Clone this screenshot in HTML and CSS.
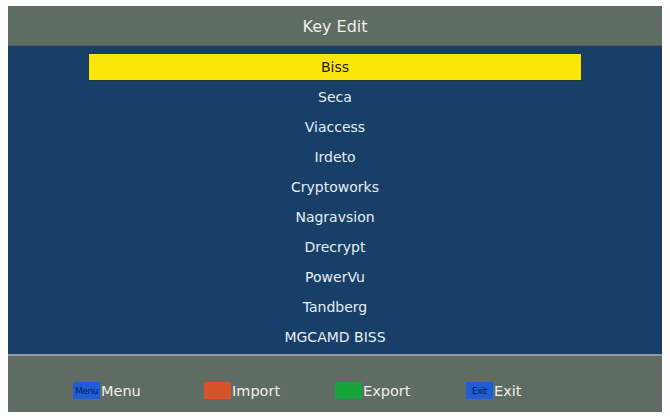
FILE: index.html
```html
<!DOCTYPE html>
<html lang="en">
<head>
  <meta charset="UTF-8">
  <title>Key Edit</title>
  <link rel="stylesheet" href="styles.css">
</head>
<body>
  <div class="screen">
    <div class="header">Key Edit</div>
    <ul class="key-list">
      <li class="key selected">Biss</li>
      <li class="key">Seca</li>
      <li class="key">Viaccess</li>
      <li class="key">Irdeto</li>
      <li class="key">Cryptoworks</li>
      <li class="key">Nagravsion</li>
      <li class="key">Drecrypt</li>
      <li class="key">PowerVu</li>
      <li class="key">Tandberg</li>
      <li class="key">MGCAMD BISS</li>
    </ul>
    <div class="footer">
      <div class="hint"><span class="swatch blue">Menu</span>Menu</div>
      <div class="hint"><span class="swatch red"></span>Import</div>
      <div class="hint"><span class="swatch green"></span>Export</div>
      <div class="hint"><span class="swatch blue">Exit</span>Exit</div>
    </div>
  </div>
</body>
</html>
```

FILE: styles.css
```css
/* General Styling */
body {
  margin: 0;
  padding: 6px 8px;
  background: #fff;
  font-family: "DejaVu Sans", Verdana, sans-serif;
}

.screen {
  width: 654px;
  height: 406px;
  display: flex;
  flex-direction: column;
  background: #5f6c63;
}

.header {
  height: 40px;
  padding-top: 1px;
  display: flex;
  align-items: center;
  justify-content: center;
  color: #eef0ee;
  font-size: 16px;
  border-bottom: 1px solid #4c5a55;
  box-sizing: border-box;
}

.key-list {
  list-style: none;
  margin: 0;
  padding: 6px 0 0;
  height: 310px;
  box-sizing: border-box;
  background: #183f68;
  border-bottom: 2px solid #8e9c9a;
}

.key {
  height: 30px;
  display: flex;
  align-items: center;
  justify-content: center;
  color: #e6eef4;
  font-size: 14px;
}

.key.selected {
  width: 494px;
  height: 28px;
  margin: 1px auto;
  background: #fbe60c;
  border: 1px solid #203a3a;
  box-sizing: border-box;
  color: #1c1c10;
}

.footer {
  flex: 1;
  display: flex;
  align-items: flex-start;
  padding: 26px 0 0 65px;
}

.hint {
  width: 131px;
  display: flex;
  align-items: center;
  color: #eef0ee;
  font-size: 14.5px;
}

.swatch {
  width: 27px;
  height: 17px;
  margin-right: 1px;
  display: flex;
  align-items: center;
  justify-content: center;
  font-size: 9px;
  color: #0c1a40;
  letter-spacing: -0.5px;
}

.swatch.blue {
  background: #1d5ed8;
}

.swatch.red {
  background: #d65428;
}

.swatch.green {
  background: #17a23a;
}
```
